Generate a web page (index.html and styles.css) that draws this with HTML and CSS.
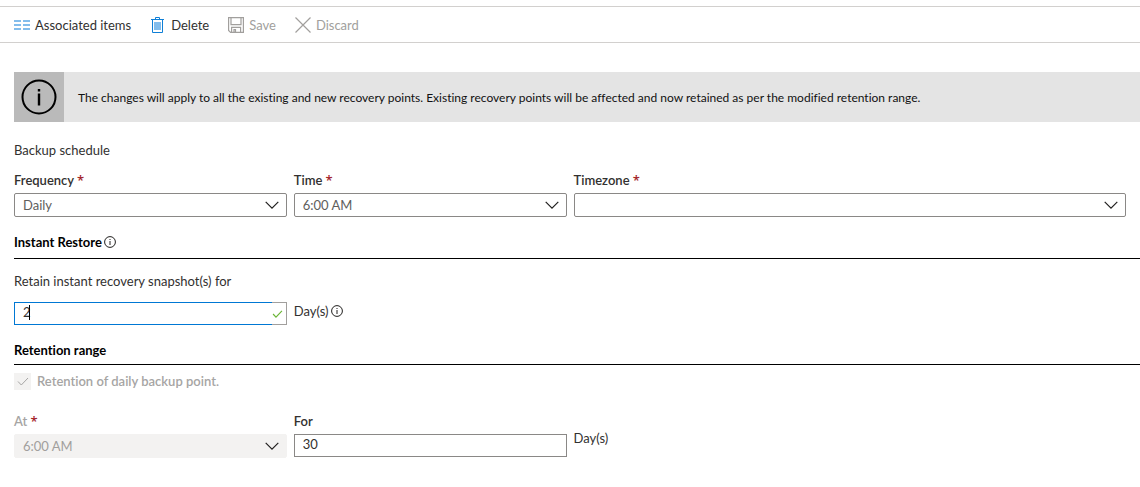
FILE: index.html
```html
<!DOCTYPE html>
<html lang="en">
<head>
<meta charset="utf-8">
<title>Backup policy</title>
<link rel="stylesheet" href="styles.css">
</head>
<body>
<svg class="symbols" aria-hidden="true">
  <symbol id="chevron" viewBox="0 0 14 8"><path d="M.7.9 7 7.1 13.3.9" fill="none" stroke="currentColor" stroke-width="1.2"/></symbol>
  <symbol id="info" viewBox="0 0 12 12"><circle cx="6" cy="6" r="5.4" fill="none" stroke="currentColor" stroke-width="1"/><path d="M6 5v4M6 3v1" stroke="currentColor" stroke-width="1"/></symbol>
</svg>

<div class="toolbar" role="toolbar">
  <button class="command" type="button">
    <svg class="command-icon" viewBox="0 0 16 16"><path d="M0 3h7v2H0zM9 3h7v2H9zM0 7h7v2H0zM9 7h7v2H9zM0 11h7v2H0zM9 11h7v2H9z" fill="#83bdec"/></svg>
    Associated items
  </button>
  <button class="command" type="button">
    <svg class="command-icon" viewBox="0 0 16 16"><path d="M5.500 2V.5h4V2M1 2.500h13M2.500 3v12.500h10V3" fill="none" stroke="#0f7fd6"/><path d="M4 5h7v8H4z" fill="#83bdec"/></svg>
    Delete
  </button>
  <button class="command" type="button" disabled>
    <svg class="command-icon" viewBox="0 0 16 16"><path d="M.6.6h14.800v14.800H2.600l-2-2zM3 .6v7h10v-7M3.600 15.400v-5h9v5M6 15v-2.500h1.500V15" fill="none" stroke="currentColor" stroke-width="1.200"/></svg>
    Save
  </button>
  <button class="command" type="button" disabled>
    <svg class="command-icon" viewBox="0 0 16 16"><path d="M.5.5l15 15M15.500.5l-15 15" fill="none" stroke="currentColor" stroke-width="1.200"/></svg>
    Discard
  </button>
</div>

<main class="content">
  <div class="notice" role="status">
    <div class="notice-badge">
      <svg class="notice-icon" viewBox="0 0 36 36"><circle cx="18" cy="18" r="16.500" fill="none" stroke="#000" stroke-width="2"/><path d="M18 14.500v12M18 10v2.500" stroke="#000" stroke-width="2.400"/></svg>
    </div>
    <p class="notice-text">The changes will apply to all the existing and new recovery points. Existing recovery points will be affected and now retained as per the modified retention range.</p>
  </div>

  <form>
    <p class="text schedule-title">Backup schedule</p>
    <div class="fields">
      <div class="field">
        <label class="label" for="frequency">Frequency <span class="required">*</span></label>
        <div class="dropdown"><select class="select" id="frequency"><option>Daily</option></select><svg class="chevron"><use href="#chevron"/></svg></div>
      </div>
      <div class="field">
        <label class="label" for="time">Time <span class="required">*</span></label>
        <div class="dropdown"><select class="select" id="time"><option>6:00 AM</option></select><svg class="chevron"><use href="#chevron"/></svg></div>
      </div>
      <div class="field field-wide">
        <label class="label" for="timezone">Timezone <span class="required">*</span></label>
        <div class="dropdown"><select class="select" id="timezone"><option></option></select><svg class="chevron"><use href="#chevron"/></svg></div>
      </div>
    </div>

    <h2 class="heading">Instant Restore<svg class="info"><use href="#info"/></svg></h2>
    <label class="text retain-label" for="retain">Retain instant recovery snapshot(s) for</label>
    <div class="fields">
      <div class="validated">
        <input class="input input-active" id="retain" type="text" value="2">
        <span class="caret"></span>
        <svg class="valid-icon" viewBox="0 0 12 9"><path d="M1 4.500 4.300 8 11 1" fill="none" stroke="#6bb536" stroke-width="1.300"/></svg>
      </div>
      <span class="unit">Day(s)<svg class="info"><use href="#info"/></svg></span>
    </div>

    <h2 class="heading heading-range">Retention range</h2>
    <div class="check-row">
      <span class="check">
        <input class="checkbox" id="daily" type="checkbox" checked disabled>
        <svg class="check-icon" viewBox="0 0 12 9"><path d="M1 4.500 4.300 8 11 1" fill="none" stroke="#a6a5a4"/></svg>
      </span>
      <label class="label label-disabled" for="daily">Retention of daily backup point.</label>
    </div>

    <div class="fields">
      <div class="field">
        <label class="label label-disabled" for="at">At <span class="required">*</span></label>
        <div class="dropdown"><select class="select" id="at" disabled><option>6:00 AM</option></select><svg class="chevron"><use href="#chevron"/></svg></div>
      </div>
      <div class="field">
        <label class="label" for="for">For</label>
        <input class="input" id="for" type="text" value="30">
      </div>
      <span class="unit unit-below">Day(s)</span>
    </div>
  </form>
</main>
</body>
</html>
```
FILE: styles.css
```css
* {
  box-sizing: border-box;
}

body {
  margin: 0;
  padding-top: 6px;
  background: #fff;
  color: #323130;
  font: 13px/20px Lato, "Open Sans", sans-serif;
  font-variant-ligatures: none;
}

button,
input,
select {
  font: inherit;
  color: inherit;
  margin: 0;
}

svg {
  display: block;
  flex: none;
}

.symbols {
  position: absolute;
  width: 0;
  height: 0;
}

.toolbar {
  display: flex;
  align-items: center;
  gap: 19px;
  padding: 8px 14px 7px;
  border-top: 1px solid #d2d0ce;
  border-bottom: 1px solid #d2d0ce;
}

.command {
  display: flex;
  align-items: center;
  gap: 5px;
  padding: 0;
  border: 0;
  background: none;
}

.command:disabled {
  color: #a19f9d;
}

.command-icon {
  width: 16px;
  height: 16px;
}

.content {
  padding: 29px 0 24px 14px;
}

.notice {
  display: flex;
  min-height: 50px;
  background: #e4e4e4;
}

.notice-badge {
  display: flex;
  flex: none;
  align-items: center;
  justify-content: center;
  width: 50px;
  background: #bababa;
}

.notice-icon {
  width: 36px;
  height: 36px;
}

.notice-text {
  align-self: center;
  margin: 0;
  padding: 2px 14px 0;
  color: #111;
  font-size: 12px;
}

.text {
  display: block;
  margin: 0;
}

.schedule-title {
  margin: 18px 0 10px;
}

.fields {
  display: grid;
  grid-template-columns: repeat(4, 1fr);
  gap: 7px;
  padding-right: 14px;
}

.field-wide {
  grid-column: span 2;
}

.label {
  display: block;
  font-weight: 600;
  margin-bottom: 3px;
}

.label-disabled {
  color: #a6a5a4;
}

.required {
  color: #a4262c;
  font-family: "Open Sans", sans-serif;
  line-height: 1;
}

.dropdown {
  position: relative;
}

.select {
  appearance: none;
  display: block;
  width: 100%;
  height: 24px;
  padding: 0 32px 0 8px;
  border: 1px solid #8a8886;
  border-radius: 2px;
  background: #fff;
  color: #605e5c;
}

.select:disabled {
  border-color: #f3f2f1;
  background: #f3f2f1;
  color: #a19f9d;
  opacity: 1;
}

.chevron {
  position: absolute;
  top: 8px;
  right: 8px;
  width: 14px;
  height: 8px;
  color: #201f1e;
  pointer-events: none;
}

.heading {
  display: flex;
  align-items: center;
  gap: 2px;
  margin: 15px 0 12px;
  padding-bottom: 6px;
  border-bottom: 1px solid #000;
  color: #000;
  font-size: 13px;
  font-weight: 700;
}

.info {
  width: 12px;
  height: 12px;
  color: #201f1e;
}

.retain-label {
  margin-bottom: 11px;
}

.input {
  display: block;
  width: 100%;
  height: 23px;
  padding: 0 8px 3px;
  border: 1px solid #8a8886;
  border-radius: 0;
  background: #fff;
  outline: 0;
}

.validated {
  position: relative;
  height: 23px;
  padding-right: 14px;
  border: 1px solid #a19f9d;
  border-width: 0 1px 0 0;
  box-shadow: inset 0 1px #a19f9d, inset 0 -1px #a19f9d;
}

.input-active {
  border-color: #0078d4;
  border-right: 0;
}

.caret {
  position: absolute;
  top: 3px;
  left: 15px;
  width: 1px;
  height: 15px;
  background: #000;
}

.valid-icon {
  position: absolute;
  top: 8px;
  right: 3px;
  width: 11px;
  height: 8px;
}

.unit {
  display: flex;
  align-items: center;
  align-self: start;
  gap: 2px;
  line-height: 18px;
}

.unit-below {
  margin-top: 18px;
}

.heading-range {
  margin-bottom: 6px;
  padding-bottom: 4px;
}

.check-row {
  display: flex;
  align-items: center;
  gap: 6px;
  margin-bottom: 20px;
}

.check-row .label {
  margin: 0;
}

.check {
  position: relative;
}

.checkbox {
  appearance: none;
  display: block;
  width: 17px;
  height: 17px;
  background: #f3f2f1;
}

.check-icon {
  position: absolute;
  top: 4px;
  left: 3px;
  width: 12px;
  height: 9px;
}
```
